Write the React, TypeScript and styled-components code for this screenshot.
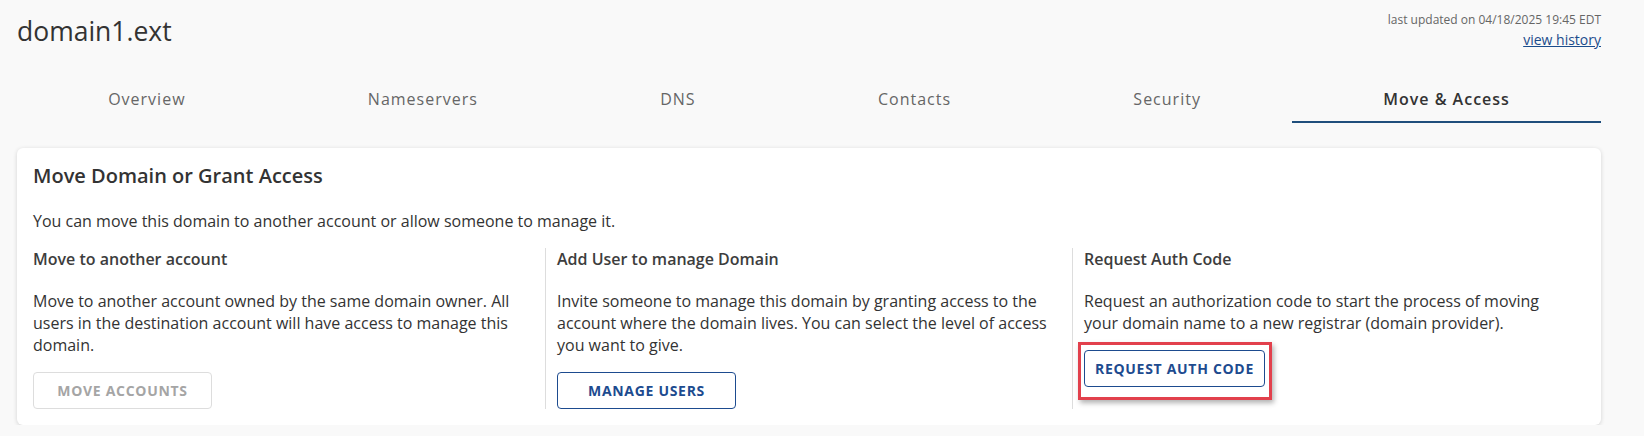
import React from "react";
import styled, { createGlobalStyle } from "styled-components";

const GlobalStyle = createGlobalStyle`
  html, body {
    margin: 0;
    padding: 0;
    background: #f9f9f9;
    font-family: "Open Sans", "Noto Sans", "Liberation Sans", sans-serif;
    color: #333;
  }
  * {
    box-sizing: border-box;
  }
`;

const Page = styled.div`
  padding: 12px 43px 0 17px;
`;

const Header = styled.header`
  display: flex;
  justify-content: space-between;
  align-items: flex-start;
`;

const DomainTitle = styled.h1`
  margin: 0;
  padding-top: 1px;
  font-size: 26.5px;
  line-height: 36px;
  font-weight: 400;
  color: #333;
`;

const Meta = styled.div`
  text-align: right;
`;

const Updated = styled.div`
  font-size: 12px;
  line-height: 16px;
  color: #666;
`;

const HistoryLink = styled.a`
  display: block;
  margin-top: 2px;
  font-size: 14px;
  line-height: 20px;
  color: #1b4c8c;
  text-decoration: underline;
`;

const Tabs = styled.nav`
  display: flex;
  margin-top: 24px;
`;

const Tab = styled.div<{ $active?: boolean }>`
  flex: 1 1 auto;
  text-align: center;
  padding: 14px 0 11px;
  font-size: 16px;
  line-height: 22px;
  letter-spacing: 1px;
  font-weight: ${(p) => (p.$active ? 600 : 400)};
  color: ${(p) => (p.$active ? "#333" : "#666")};
  border-bottom: 2px solid ${(p) => (p.$active ? "#1f4e7c" : "transparent")};
  cursor: pointer;
`;

const Card = styled.section`
  margin-top: 25px;
  background: #fff;
  border-radius: 6px;
  box-shadow: 0 1px 4px rgba(0, 0, 0, 0.16);
  padding: 14px 16px 16px;
`;

const CardTitle = styled.h2`
  margin: 0;
  font-size: 20px;
  line-height: 28px;
  font-weight: 600;
  color: #333;
`;

const Intro = styled.p`
  margin: 20px 0 0;
  font-size: 16px;
  line-height: 22px;
  color: #333;
`;

const Columns = styled.div`
  display: grid;
  grid-template-columns: 512px 527px 1fr;
  margin-top: 16px;
`;

const Column = styled.div<{ $divider?: boolean }>`
  display: flex;
  flex-direction: column;
  align-items: flex-start;
  padding: 0 12px 0 ${(p) => (p.$divider ? "11px" : "0")};
  border-left: ${(p) => (p.$divider ? "1px solid #ddd" : "none")};
`;

const ColumnHeading = styled.h3`
  margin: 0;
  font-size: 16px;
  line-height: 22px;
  font-weight: 600;
  color: #3d3d3d;
`;

const ColumnText = styled.p`
  margin: 20px 0 0;
  font-size: 16px;
  line-height: 22px;
  color: #333;
`;

const ActionButton = styled.button<{ $disabled?: boolean }>`
  margin-top: 16px;
  min-width: 179px;
  height: 37px;
  padding: 0 10px;
  background: #fff;
  border: 1px solid ${(p) => (p.$disabled ? "#ddd" : "#1d4b8f")};
  border-radius: 4px;
  font-family: inherit;
  font-size: 14px;
  font-weight: 700;
  letter-spacing: 0.7px;
  text-transform: uppercase;
  color: ${(p) => (p.$disabled ? "#a5a5a5" : "#1d4b8f")};
  cursor: ${(p) => (p.$disabled ? "default" : "pointer")};
`;

const Highlight = styled.span`
  position: relative;
  display: inline-flex;

  &::after {
    content: "";
    position: absolute;
    top: 8px;
    left: -6px;
    right: -7px;
    bottom: -13px;
    border: 3px solid #e2404c;
    box-shadow: 2px 3px 5px rgba(0, 0, 0, 0.3);
    pointer-events: none;
  }
`;

const tabs = ["Overview", "Nameservers", "DNS", "Contacts", "Security", "Move & Access"];

export default function App() {
  return (
    <>
      <GlobalStyle />
      <Page>
        <Header>
          <DomainTitle>domain1.ext</DomainTitle>
          <Meta>
            <Updated>last updated on 04/18/2025 19:45 EDT</Updated>
            <HistoryLink href="#">view history</HistoryLink>
          </Meta>
        </Header>

        <Tabs>
          {tabs.map((t) => (
            <Tab key={t} $active={t === "Move & Access"}>
              {t}
            </Tab>
          ))}
        </Tabs>

        <Card>
          <CardTitle>Move Domain or Grant Access</CardTitle>
          <Intro>You can move this domain to another account or allow someone to manage it.</Intro>
          <Columns>
            <Column>
              <ColumnHeading>Move to another account</ColumnHeading>
              <ColumnText>
                Move to another account owned by the same domain owner. All users in the destination
                account will have access to manage this domain.
              </ColumnText>
              <ActionButton $disabled>Move Accounts</ActionButton>
            </Column>
            <Column $divider>
              <ColumnHeading>Add User to manage Domain</ColumnHeading>
              <ColumnText>
                Invite someone to manage this domain by granting access to the account where the
                domain lives. You can select the level of access you want to give.
              </ColumnText>
              <ActionButton>Manage Users</ActionButton>
            </Column>
            <Column $divider>
              <ColumnHeading>Request Auth Code</ColumnHeading>
              <ColumnText>
                Request an authorization code to start the process of moving your domain name to a
                new registrar (domain provider).
              </ColumnText>
              <Highlight>
                <ActionButton>Request Auth Code</ActionButton>
              </Highlight>
            </Column>
          </Columns>
        </Card>
      </Page>
    </>
  );
}
